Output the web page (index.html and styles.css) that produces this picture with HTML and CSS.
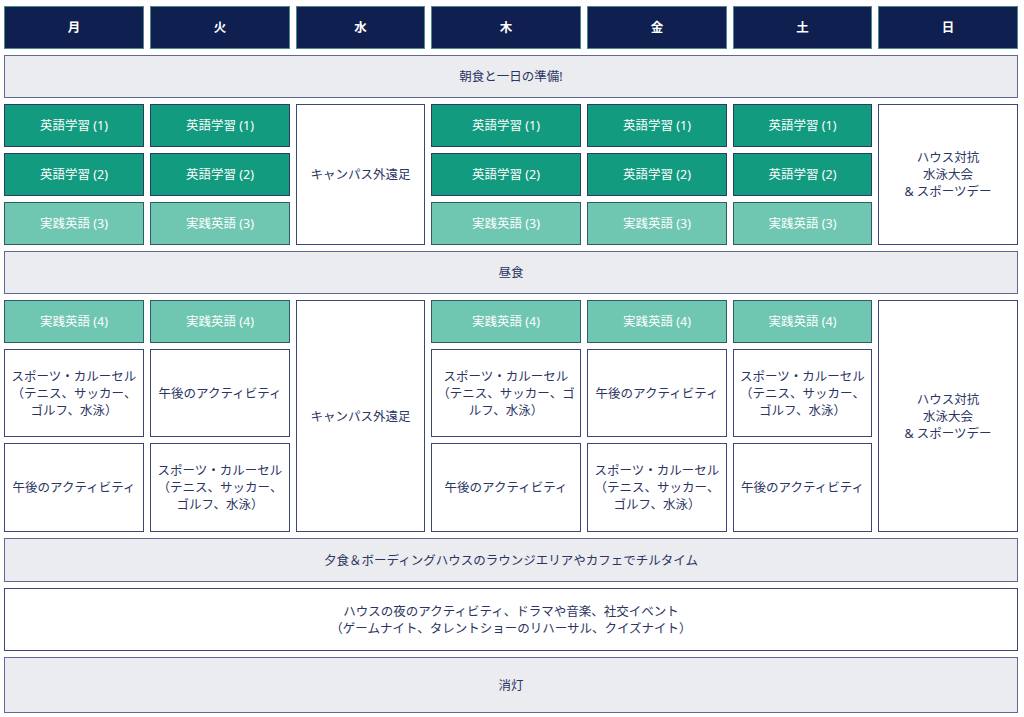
FILE: index.html
```html
<!DOCTYPE html>
<html lang="ja">
<head>
<meta charset="utf-8">
<link rel="stylesheet" href="styles.css">
</head>
<body>
<div class="schedule">
  <div class="cell head">月</div>
  <div class="cell head">火</div>
  <div class="cell head">水</div>
  <div class="cell head">木</div>
  <div class="cell head">金</div>
  <div class="cell head">土</div>
  <div class="cell head">日</div>

  <div class="cell gray full">朝食と一日の準備!</div>

  <div class="cell dark">英語学習 (1)</div>
  <div class="cell dark">英語学習 (1)</div>
  <div class="cell plain span3">キャンパス外遠足</div>
  <div class="cell dark">英語学習 (1)</div>
  <div class="cell dark">英語学習 (1)</div>
  <div class="cell dark">英語学習 (1)</div>
  <div class="cell plain span3">ハウス対抗<br>水泳大会<br>&amp; スポーツデー</div>

  <div class="cell dark">英語学習 (2)</div>
  <div class="cell dark">英語学習 (2)</div>
  <div class="cell dark">英語学習 (2)</div>
  <div class="cell dark">英語学習 (2)</div>
  <div class="cell dark">英語学習 (2)</div>

  <div class="cell light">実践英語 (3)</div>
  <div class="cell light">実践英語 (3)</div>
  <div class="cell light">実践英語 (3)</div>
  <div class="cell light">実践英語 (3)</div>
  <div class="cell light">実践英語 (3)</div>

  <div class="cell gray full">昼食</div>

  <div class="cell light">実践英語 (4)</div>
  <div class="cell light">実践英語 (4)</div>
  <div class="cell plain span3">キャンパス外遠足</div>
  <div class="cell light">実践英語 (4)</div>
  <div class="cell light">実践英語 (4)</div>
  <div class="cell light">実践英語 (4)</div>
  <div class="cell plain span3">ハウス対抗<br>水泳大会<br>&amp; スポーツデー</div>

  <div class="cell plain">スポーツ・カルーセル<br>（テニス、サッカー、<br>ゴルフ、水泳）</div>
  <div class="cell plain">午後のアクティビティ</div>
  <div class="cell plain">スポーツ・カルーセル<br>（テニス、サッカー、ゴ<br>ルフ、水泳）</div>
  <div class="cell plain">午後のアクティビティ</div>
  <div class="cell plain">スポーツ・カルーセル<br>（テニス、サッカー、<br>ゴルフ、水泳）</div>

  <div class="cell plain">午後のアクティビティ</div>
  <div class="cell plain">スポーツ・カルーセル<br>（テニス、サッカー、<br>ゴルフ、水泳）</div>
  <div class="cell plain">午後のアクティビティ</div>
  <div class="cell plain">スポーツ・カルーセル<br>（テニス、サッカー、<br>ゴルフ、水泳）</div>
  <div class="cell plain">午後のアクティビティ</div>

  <div class="cell gray full">夕食＆ボーディングハウスのラウンジエリアやカフェでチルタイム</div>
  <div class="cell plain full">ハウスの夜のアクティビティ、ドラマや音楽、社交イベント<br>（ゲームナイト、タレントショーのリハーサル、クイズナイト）</div>
  <div class="cell gray full">消灯</div>
</div>
</body>
</html>
```

FILE: styles.css
```css
html, body {
  margin: 0;
  padding: 0;
  background: #ffffff;
}

body {
  font-family: "Noto Sans", "Noto Sans CJK JP", sans-serif;
  font-size: 12.5px;
  color: #2b3462;
}

.schedule {
  display: grid;
  grid-template-columns: 140px 140px 129px 150px 140px 139px 140px;
  grid-template-rows: 43px 43px 43px 43px 43px 43px 43px 88px 89px 44px 63px 56px;
  column-gap: 6px;
  row-gap: 6px;
  padding: 6px 6px 0 4px;
}

.cell {
  box-sizing: border-box;
  display: flex;
  align-items: center;
  justify-content: center;
  text-align: center;
  line-height: 17px;
  border: 1px solid #3b4577;
  background: #ffffff;
}

.head {
  background: #0f1f4f;
  border-color: #4b8a86;
  color: #ffffff;
  font-weight: 700;
}

.gray {
  background: #ebecf0;
  border-color: #5f6992;
}

.full {
  grid-column: 1 / -1;
}

.span3 {
  grid-row: span 3;
}

.dark {
  background: #139b80;
  color: #ffffff;
  border-color: #2b3d66;
}

.light {
  background: #6fc6b1;
  color: #ffffff;
  border-color: #2f5c66;
}

.plain {
  background: #ffffff;
}
```
